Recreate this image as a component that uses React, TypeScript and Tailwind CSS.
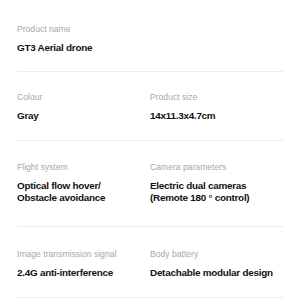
const rows: { label: string; value: string }[][] = [
  [{ label: "Product name", value: "GT3 Aerial drone" }],
  [
    { label: "Colour", value: "Gray" },
    { label: "Product size", value: "14x11.3x4.7cm" },
  ],
  [
    { label: "Flight system", value: "Optical flow hover/\nObstacle avoidance" },
    { label: "Camera parameters", value: "Electric dual cameras\n(Remote 180 ° control)" },
  ],
  [
    { label: "Image transmission signal", value: "2.4G anti-interference" },
    { label: "Body battery", value: "Detachable modular design" },
  ],
];

const heights = ["h-[72px] pt-[23px]", "h-[69px] pt-[19px]", "h-[86px] pt-[20px]", "h-[71px] pt-[21px]"];

export default function App() {
  return (
    <div className="w-[300px] h-[300px] bg-white px-[17px] font-['Liberation_Sans',Arial,sans-serif] overflow-hidden">
      {rows.map((row, i) => (
        <div key={i} className={`${heights[i]} border-b border-[#ececec] grid grid-cols-2`}>
          {row.map((cell) => (
            <div key={cell.label} className={row.length === 2 ? "" : "col-span-2"}>
              <div className="text-[8.6px] leading-[12px] text-[#a8a8a8]">{cell.label}</div>
              <div className="mt-[7px] text-[9.9px] leading-[12px] font-bold tracking-[-0.25px] text-[#111] whitespace-pre-line">
                {cell.value}
              </div>
            </div>
          ))}
        </div>
      ))}
    </div>
  );
}
